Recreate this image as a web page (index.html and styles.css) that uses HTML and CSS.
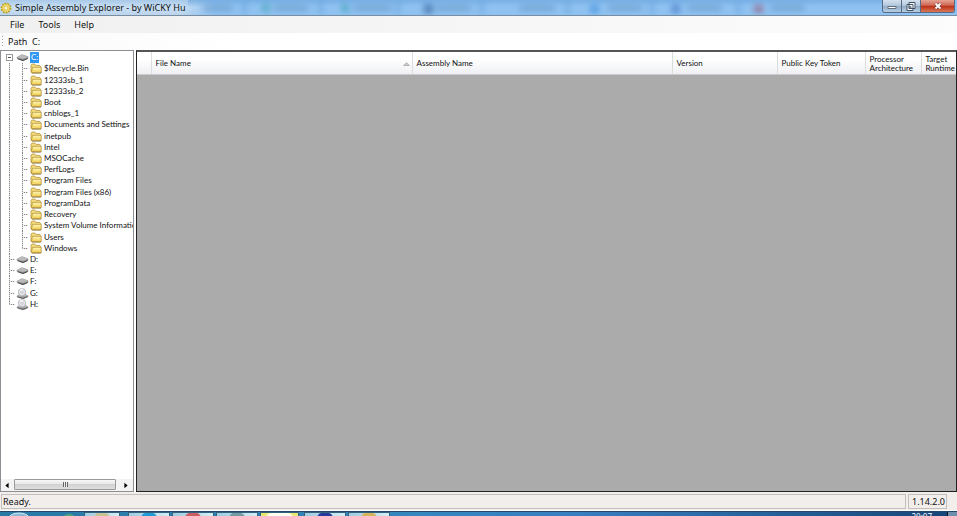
FILE: index.html
```html
<!DOCTYPE html>
<html lang="en">
<head>
<meta charset="utf-8">
<title>Simple Assembly Explorer - by WiCKY Hu</title>
<link rel="stylesheet" href="styles.css">
</head>
<body>
<svg class="defs" aria-hidden="true">
  <defs>
    <linearGradient id="gold" x1="0" y1="0" x2="0" y2="1"><stop offset="0" stop-color="#fff9bd"/><stop offset="1" stop-color="#efc845"/></linearGradient>
    <linearGradient id="steel" x1="0" y1="0" x2="0" y2="1"><stop offset="0" stop-color="#d8d8d8"/><stop offset="1" stop-color="#777"/></linearGradient>
    <symbol id="folder" viewBox="0 0 12 11">
      <path d="M1 9V2.2L2.2 1h2.6L6 2.4h3.8l.8 1V9z" fill="#f4dc7c" stroke="#ac872f" stroke-width=".7"/>
      <path d="M1.2 9.6 2.6 4.3h8.6v4.6l-.8.9H1.8z" fill="url(#gold)" stroke="#b08a2c" stroke-width=".7"/>
      <path d="M2 10.2h8.8l.7-1" fill="none" stroke="#77663a" stroke-width=".6"/>
    </symbol>
    <symbol id="drive" viewBox="0 0 13 11">
      <path d="M1 5.2 6 2.6l6 2.2v1.6L7 8.8 1 6.6z" fill="url(#steel)" stroke="#777" stroke-width=".5"/>
      <path d="m1.4 5.3 4.7-2.2 5.4 1.9-4.7 1.8z" fill="#bbb"/>
      <path d="m2 6.7 5 1.8 4.6-2" fill="none" stroke="#444" stroke-width=".9"/>
    </symbol>
    <symbol id="disc" viewBox="0 0 13 11">
      <path d="M1 8 4 6h5l3 1.8v1L7.3 10.8 1 9z" fill="url(#steel)" stroke="#777" stroke-width=".5"/>
      <circle cx="6" cy="4.2" r="3.7" fill="#e4e5ea" stroke="#989aa2" stroke-width=".6"/>
      <path d="M6 4.2 4 1.3a3.4 3.4 0 0 1 3-.4z" fill="#fff"/>
      <circle cx="6" cy="4.2" r="1.1" fill="#fff" stroke="#999" stroke-width=".5"/>
      <path d="m2 9 5 1.4L11.500 8.500" fill="none" stroke="#555" stroke-width=".8"/>
    </symbol>
  </defs>
</svg>
<div class="window">
  <header class="titlebar">
    <svg class="gear" viewBox="0 0 12 12" aria-hidden="true"><circle cx="6" cy="6" r="4.600" fill="#f5df68" stroke="#b89b24" stroke-width="1.600" stroke-dasharray="1.800 1"/><circle cx="6" cy="6" r="3.400" fill="#fff3a0" stroke="#c9ab2e" stroke-width=".6"/><path d="M6 3v6M3 6h6M4 4l4 4M8 4 4 8" stroke="#c5a529" stroke-width=".6"/><circle cx="6" cy="6" r="1" fill="#fff"/></svg>
    <h1>Simple Assembly Explorer - by WiCKY Hu</h1>
    <svg class="glass" viewBox="0 0 700 15" preserveAspectRatio="none" aria-hidden="true">
      <g class="haze">
        <path d="M15 8h30M87 8h34M167 8h38M250 8h35M334 8h36M424 8h34M504 8h34M588 8h34" stroke="#608fbd" stroke-width="5"/>
        <path d="M57 0v15M134 0v15M212 0v15M296 0v15M383 0v15M468 0v15M555 0v15" stroke="#6aa5da" stroke-width="5"/>
        <path d="M75 8h7M155 8h7" stroke="#339daa" stroke-width="8"/>
        <path d="M238 9h9" stroke="#2c5791" stroke-width="9"/>
        <path d="M406 9h8" stroke="#2c83d5" stroke-width="8"/>
        <path d="M488 9h8" stroke="#3465b9" stroke-width="8"/>
        <path d="M571 9h9" stroke="#94516f" stroke-width="8"/>
      </g>
    </svg>
    <div class="controls">
      <button type="button" aria-label="Minimize"><svg viewBox="0 0 12 10"><path d="M2 5.500h8v2H2z" fill="#fff" stroke="#495766" stroke-width=".8"/></svg></button>
      <button type="button" aria-label="Restore"><svg viewBox="0 0 12 10"><path d="M4 1.500h6v6H4zM2 3.500h6v6H2z" fill="#fff" stroke="#405064"/><path d="M4 5.500h2v2H4z" fill="#93a8be" stroke="#405064" stroke-width=".7"/></svg></button>
      <button type="button" class="close" aria-label="Close"><svg viewBox="0 0 12 10"><path d="m3.500 2.500 5 5m0-5-5 5" stroke="#63322d" stroke-width="3"/><path d="m3.500 2.500 5 5m0-5-5 5" stroke="#fff" stroke-width="1.800"/></svg></button>
    </div>
  </header>
  <nav class="menu"><button type="button">File</button><button type="button">Tools</button><button type="button">Help</button></nav>
  <div class="pathbar"><span class="grip"></span><label for="path">Path</label><input id="path" type="text" value="C:"></div>
  <main>
    <aside>
      <ul class="tree" role="tree">
        <li class="root open" role="treeitem"><button type="button" class="toggle" aria-label="Collapse C:"></button><svg class="disk"><use href="#drive"/></svg><span class="selected">C:</span></li>
        <li class="child" role="treeitem"><i></i><b></b><svg><use href="#folder"/></svg><span>$Recycle.Bin</span></li>
        <li class="child" role="treeitem"><i></i><b></b><svg><use href="#folder"/></svg><span>12333sb_1</span></li>
        <li class="child" role="treeitem"><i></i><b></b><svg><use href="#folder"/></svg><span>12333sb_2</span></li>
        <li class="child" role="treeitem"><i></i><b></b><svg><use href="#folder"/></svg><span>Boot</span></li>
        <li class="child" role="treeitem"><i></i><b></b><svg><use href="#folder"/></svg><span>cnblogs_1</span></li>
        <li class="child" role="treeitem"><i></i><b></b><svg><use href="#folder"/></svg><span>Documents and Settings</span></li>
        <li class="child" role="treeitem"><i></i><b></b><svg><use href="#folder"/></svg><span>inetpub</span></li>
        <li class="child" role="treeitem"><i></i><b></b><svg><use href="#folder"/></svg><span>Intel</span></li>
        <li class="child" role="treeitem"><i></i><b></b><svg><use href="#folder"/></svg><span>MSOCache</span></li>
        <li class="child" role="treeitem"><i></i><b></b><svg><use href="#folder"/></svg><span>PerfLogs</span></li>
        <li class="child" role="treeitem"><i></i><b></b><svg><use href="#folder"/></svg><span>Program Files</span></li>
        <li class="child" role="treeitem"><i></i><b></b><svg><use href="#folder"/></svg><span>Program Files (x86)</span></li>
        <li class="child" role="treeitem"><i></i><b></b><svg><use href="#folder"/></svg><span>ProgramData</span></li>
        <li class="child" role="treeitem"><i></i><b></b><svg><use href="#folder"/></svg><span>Recovery</span></li>
        <li class="child" role="treeitem"><i></i><b></b><svg><use href="#folder"/></svg><span>System Volume Informatio</span></li>
        <li class="child" role="treeitem"><i></i><b></b><svg><use href="#folder"/></svg><span>Users</span></li>
        <li class="child" role="treeitem"><i></i><b class="end"></b><svg><use href="#folder"/></svg><span>Windows</span></li>
        <li class="root" role="treeitem"><b></b><svg class="disk"><use href="#drive"/></svg><span>D:</span></li>
        <li class="root" role="treeitem"><b></b><svg class="disk"><use href="#drive"/></svg><span>E:</span></li>
        <li class="root" role="treeitem"><b></b><svg class="disk"><use href="#drive"/></svg><span>F:</span></li>
        <li class="root" role="treeitem"><b></b><svg class="disk"><use href="#disc"/></svg><span>G:</span></li>
        <li class="root" role="treeitem"><b class="end"></b><svg class="disk"><use href="#disc"/></svg><span>H:</span></li>
      </ul>
      <div class="scroll">
        <button type="button" aria-label="Scroll left"><svg viewBox="0 0 10 10"><path d="M6.500 2.500v5L3.500 5z"/></svg></button>
        <div class="thumb"><span></span></div>
        <button type="button" aria-label="Scroll right"><svg viewBox="0 0 10 10"><path d="M3.500 2.500v5l3-2.500z"/></svg></button>
      </div>
    </aside>
    <section class="grid">
      <table>
        <colgroup><col class="c-row"><col class="c-file"><col><col class="c-version"><col class="c-key"><col class="c-arch"><col class="c-run"></colgroup>
        <thead><tr><td></td><th><div class="sorted">File Name<svg viewBox="0 0 8 5" aria-hidden="true"><path d="M.5 4.500h7L4 .8z" fill="#ccc" stroke="#888" stroke-width=".7"/></svg></div></th><th>Assembly Name</th><th>Version</th><th>Public Key Token</th><th>Processor Architecture</th><th>Target Runtime</th></tr></thead>
      </table>
    </section>
  </main>
  <footer class="status"><span class="message">Ready.</span><span class="version">1.14.2.0</span></footer>
  <div class="taskbar">
    <svg class="orb" viewBox="0 0 84 5" preserveAspectRatio="none" aria-hidden="true"><ellipse cx="19" cy="6" rx="10" ry="5" fill="#8db8d3" stroke="#d6edf5"/><ellipse cx="69" cy="6" rx="6" ry="4" fill="#53a67b"/></svg>
    <span class="task tan"></span><span class="task blue"></span><span class="task red"></span><span class="task gray"></span><span class="task yellow"></span><span class="task navy"></span><span class="task orange"></span>
    <span class="clock">20:07</span><span class="desktop"></span>
  </div>
</div>
</body>
</html>
```
FILE: styles.css
```css
* { box-sizing: border-box; }
body { margin: 0; background: #fff; color: #111; font: 9px/12px "Noto Sans", sans-serif; }
button { border: 0; padding: 0; background: none; color: inherit; font: inherit; }
svg { display: block; flex: none; }
.defs { position: absolute; width: 0; height: 0; }
.window { display: flex; flex-direction: column; height: 100vh; overflow: hidden; }

.titlebar { display: flex; flex: none; align-items: center; height: 16px; border-bottom: 1px solid #788da0; background: linear-gradient(90deg, #fff0 180px, #8fc2f1 215px), linear-gradient(#a9c9e8, #c9e0f4 50%, #bbd4ec); }
.gear { width: 12px; height: 12px; }
h1 { flex: none; width: 173px; margin: 0 0 0 3px; font: inherit; white-space: nowrap; }
.glass { flex: 1; min-width: 0; height: 15px; background: linear-gradient(#5e9bd977, #fff0 45%); }
.haze { filter: blur(3px); opacity: .65; }
.controls { display: flex; align-self: flex-start; flex: none; margin-right: 2px; border: 1px solid #526a85; border-top: 0; border-radius: 0 0 3px 3px; overflow: hidden; }
.controls button { display: flex; justify-content: center; align-items: center; width: 19px; height: 12px; border-right: 1px solid #526a85; background: linear-gradient(#d4e1ed, #b5c9dd 45%, #91abc5 50%, #b6cee2); }
.controls svg { width: 12px; height: 10px; }
.controls .close { width: 33px; border-right: 0; background: linear-gradient(#e6a394, #cf6551 45%, #b92e17 50%, #da7855); }

.menu { display: flex; flex: none; gap: 14px; height: 17px; padding-left: 10px; background: linear-gradient(90deg, #f0f0f0, #fcfcfc); }
.pathbar { display: flex; flex: none; align-items: center; height: 17px; background: linear-gradient(90deg, #fafafa, #fff 240px); }
.grip { width: 1px; height: 12px; margin: 0 5px 0 2px; background: repeating-linear-gradient(#aaa 0 1px, #fff 1px 3px); }
.pathbar label { width: 24px; }
.pathbar input { flex: 1; min-width: 0; height: 15px; padding: 0; border: 0; background: none; color: inherit; font: inherit; outline: 0; }

main { display: flex; flex: 1; min-height: 0; gap: 2px; }
aside { display: flex; flex: none; flex-direction: column; width: 134px; border: 1px solid #8c8f94; background: #fff; font: 8px/11px Lato, sans-serif; }
.tree { display: grid; grid-template-rows: repeat(23, 1fr); height: 258px; margin: 1px 0 auto; padding: 0; list-style: none; overflow: hidden; }
.tree li { display: flex; align-items: center; min-height: 0; padding-left: 8px; white-space: nowrap; }
.tree svg { width: 12px; height: 11px; margin-right: 2px; }
.tree .disk { width: 13px; margin-right: 1px; }
.tree i, .tree b { flex: none; align-self: stretch; background: repeating-linear-gradient(#888 0 1px, #ddd 1px 2px) 0 0 / 1px 100% no-repeat; }
.tree i { width: 13px; }
.tree b { width: 8px; background: repeating-linear-gradient(#888 0 1px, #ddd 1px 2px) 0 0 / 1px 100% no-repeat, repeating-linear-gradient(90deg, #888 0 1px, #ddd 1px 2px) 0 50% / 6px 1px no-repeat; }
.root b { width: 7px; }
.tree b.end { background-size: 1px 50%, 6px 1px; }
.tree .open { padding-left: 5px; }
.toggle { flex: none; width: 7px; height: 7px; margin-right: 3px; border: 1px solid #999; background: linear-gradient(#555, #555) center / 3px 1px no-repeat #fff; }
.selected { padding: 0 1px; background: #3197f5; color: #fff; }

.scroll { display: flex; flex: none; height: 12px; background: #f3f3f3; }
.scroll button { width: 13px; }
.scroll svg { width: 12px; height: 11px; }
.thumb { display: flex; flex: none; justify-content: center; align-items: center; width: 102px; height: 11px; margin-right: 4px; border: 1px solid #999; border-radius: 1px; background: linear-gradient(#f8f8f8, #e8e8e8 45%, #d2d2d2 50%, #dedede); }
.thumb span { width: 5px; height: 5px; background: repeating-linear-gradient(90deg, #666 0 1px, #eee 1px 2px); }

.grid { flex: 1; min-width: 0; border: 1px solid #222; border-top: 2px solid #555; background: #ababab; }
table { width: 100%; height: 23px; border-collapse: collapse; table-layout: fixed; font: 8px/9px Lato, sans-serif; }
.c-row { width: 14px; }
.c-file { width: 261px; }
.c-version { width: 105px; }
.c-key { width: 88px; }
.c-arch { width: 56px; }
.c-run { width: 35px; }
tr { background: linear-gradient(#fff 30%, #eeeff3); }
th, td { padding: 1px 0 0 4px; border-right: 1px solid #ddd; border-bottom: 1px solid #ccc; font-weight: 400; text-align: left; }
th:last-child { border-right: 0; }
.sorted { display: flex; justify-content: space-between; align-items: center; padding-right: 2px; }
.sorted svg { width: 7px; height: 4px; }

.status { display: flex; flex: none; gap: 2px; height: 19px; padding: 2px 10px 1px 1px; border-bottom: 1px solid #fff; background: #f1eeec; line-height: 14px; }
.status span { border: 1px solid #c2bfbc; }
.message { flex: 1; padding-left: 1px; }
.version { width: 39px; padding-left: 3px; }

.taskbar { display: flex; flex: none; height: 5px; border-top: 1px solid #23496a; background: linear-gradient(90deg, #2879a4, #3587bf 44%, #387fc0 60%, #164577); overflow: hidden; }
.orb { width: 84px; height: 5px; }
.task { flex: none; width: 42px; margin-right: 2px; border: 1px solid #31627e; border-bottom: 0; background: radial-gradient(ellipse 8px 4px at 50% 100%, var(--app) 80%, #fff0), linear-gradient(90deg, #9fcbe1, #d6edf5); }
.tan { --app: #c8c394; width: 36px; margin-right: 8px; }
.blue { --app: #219bd7; }
.red { --app: #ca5d61; }
.gray { --app: #759ca3; }
.yellow { --app: #fffef0; width: 39px; margin-right: 5px; background: radial-gradient(ellipse 14px 5px at 50% 100%, #fffef0 80%, #fff0), #e9e774; }
.navy { --app: #27399b; }
.orange { --app: #d5b45b; }
.clock { margin-left: auto; margin-right: 15px; color: #fff; font-size: 8px; line-height: 9px; }
.desktop { width: 10px; border-left: 1px solid #111; background: #6e8fae; }
```
